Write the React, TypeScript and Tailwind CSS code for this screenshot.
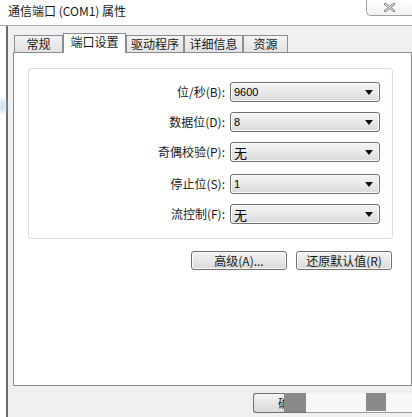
import React from "react";

const FONT = { fontFamily: '"Noto Sans CJK SC", "Liberation Sans", sans-serif' };

function Arrow() {
  return (
    <svg width="8" height="5" viewBox="0 0 8 5" className="block">
      <path d="M0 0 H8 L4 5 Z" fill="#111" />
    </svg>
  );
}

function Combo({ value, cjk }: { value: string; cjk?: boolean }) {
  return (
    <div className="w-[150px] h-[20px] border border-[#707070] rounded-[3px] bg-gradient-to-b from-[#f6f6f6] to-[#dadada] flex items-center justify-between pl-[3px] pr-[6px] shadow-[inset_0_0_0_1px_#fcfcfc]">
      <span
        className={cjk ? "text-[13px] leading-none text-black" : "text-[11px] leading-none text-black"}
        style={cjk ? FONT : { fontFamily: '"Liberation Sans", sans-serif' }}
      >
        {value}
      </span>
      <Arrow />
    </div>
  );
}

function Row({ label, value, cjk, mt }: { label: string; value: string; cjk?: boolean; mt: string }) {
  return (
    <div className={`flex items-center justify-end gap-[5px] ${mt}`}>
      <span className="text-[12px] leading-none text-[#1a1a1a]">{label}</span>
      <Combo value={value} cjk={cjk} />
    </div>
  );
}

function Btn({ children, w }: { children: React.ReactNode; w: string }) {
  return (
    <div
      className={`${w} h-[19px] border border-[#707070] rounded-[3px] bg-gradient-to-b from-[#f4f4f4] to-[#d9d9d9] flex items-center justify-center text-[12px] leading-none text-[#1a1a1a] shadow-[inset_0_0_0_1px_#fbfbfb]`}
    >
      {children}
    </div>
  );
}

function Tab({ label, selected, w }: { label: string; selected?: boolean; w: string }) {
  if (selected) {
    return (
      <div
        className={`${w} h-[20px] -mb-[1px] bg-white border border-b-0 border-[#898c95] flex items-start pt-[2px] justify-center text-[12px] leading-none text-[#1a1a1a] relative z-10`}
      >
        {label}
      </div>
    );
  }
  return (
    <div
      className={`${w} h-[17px] mt-[2px] bg-gradient-to-b from-[#f3f3f3] to-[#e2e2e2] border border-b-0 border-[#898c95] flex items-center justify-center text-[12px] leading-none text-[#1a1a1a]`}
    >
      {label}
    </div>
  );
}

export default function App() {
  return (
    <div className="w-[412px] h-[417px] bg-white overflow-hidden flex flex-col relative" style={FONT}>
      {/* title bar */}
      <div className="h-[26px] shrink-0 flex items-start justify-between border-b border-[#a9a9a9]">
        <div className="pl-[8px] pt-[4px] text-[12px] leading-[14px] text-[#1a1a1a]">通信端口 (COM1) 属性</div>
        <div className="w-[46px] h-[17px] -mt-[1px] border border-r-0 border-[#a0a0a0] rounded-bl-[5px] bg-gradient-to-b from-white to-[#f1f1f1] flex items-center justify-center">
          <svg width="11" height="9" viewBox="0 0 11 9">
            <path d="M1 1 L10 8 M10 1 L1 8" stroke="#8a8a8a" strokeWidth="2.6" strokeLinecap="square" />
            <path d="M1 1 L10 8 M10 1 L1 8" stroke="#ffffff" strokeWidth="0.9" />
          </svg>
        </div>
      </div>

      {/* body */}
      <div className="flex-1 flex">
        <div className="w-[6px] shrink-0 bg-white relative">
          <div className="absolute left-0 top-[74px] w-[5px] h-[12px] bg-[#bcd8ee] blur-[2px]"></div>
        </div>
        <div className="flex-1 border-l-2 border-[#6b6b6b] bg-[#f0f0f0] pl-[5px] pr-[7px] pt-[7px] flex flex-col">
          {/* tabs */}
          <div className="flex items-start pl-[1px] h-[19px]">
            <Tab label="常规" w="w-[49px]" />
            <Tab label="端口设置" selected w="w-[63px]" />
            <Tab label="驱动程序" w="w-[58px]" />
            <Tab label="详细信息" w="w-[59px]" />
            <Tab label="资源" w="w-[45px]" />
          </div>
          {/* panel */}
          <div className="h-[334px] bg-white border border-[#898c95] px-[14px] pt-[15px] flex flex-col">
            <div className="w-[365px] h-[171px] border border-[#d5dfe5] rounded-[3px] pt-[13px] pr-[12px] flex flex-col">
              <Row label="位/秒(B):" value="9600" mt="" />
              <Row label="数据位(D):" value="8" mt="mt-[10px]" />
              <Row label="奇偶校验(P):" value="无" cjk mt="mt-[10px]" />
              <Row label="停止位(S):" value="1" mt="mt-[12px]" />
              <Row label="流控制(F):" value="无" cjk mt="mt-[10px]" />
            </div>
            <div className="w-[365px] flex justify-end gap-[9px] mt-[12px] pr-[1px]">
              <Btn w="w-[96px]">高级(A)...</Btn>
              <Btn w="w-[96px]">还原默认值(R)</Btn>
            </div>
          </div>
          {/* bottom buttons */}
          <div className="flex mt-[7px] pl-[240px] relative">
            <div className="w-[53px] h-[20px] border border-r-0 border-[#707070] rounded-l-[3px] bg-gradient-to-b from-[#f4f4f4] to-[#d9d9d9] flex items-center pl-[24px] text-[12px] leading-none text-[#1a1a1a] overflow-hidden">
              确定
            </div>
            <div className="absolute left-[271px] top-0 w-[22px] h-[19px] bg-[#8a8a8a]"></div>
            <div className="w-[106px] h-[20px] bg-[#f7f7f7] border-b border-[#9a9a9a] relative">
              <div className="absolute left-[60px] top-0 w-[20px] h-[18px] bg-[#8a8a8a]"></div>
            </div>
          </div>
        </div>
      </div>
    </div>
  );
}
